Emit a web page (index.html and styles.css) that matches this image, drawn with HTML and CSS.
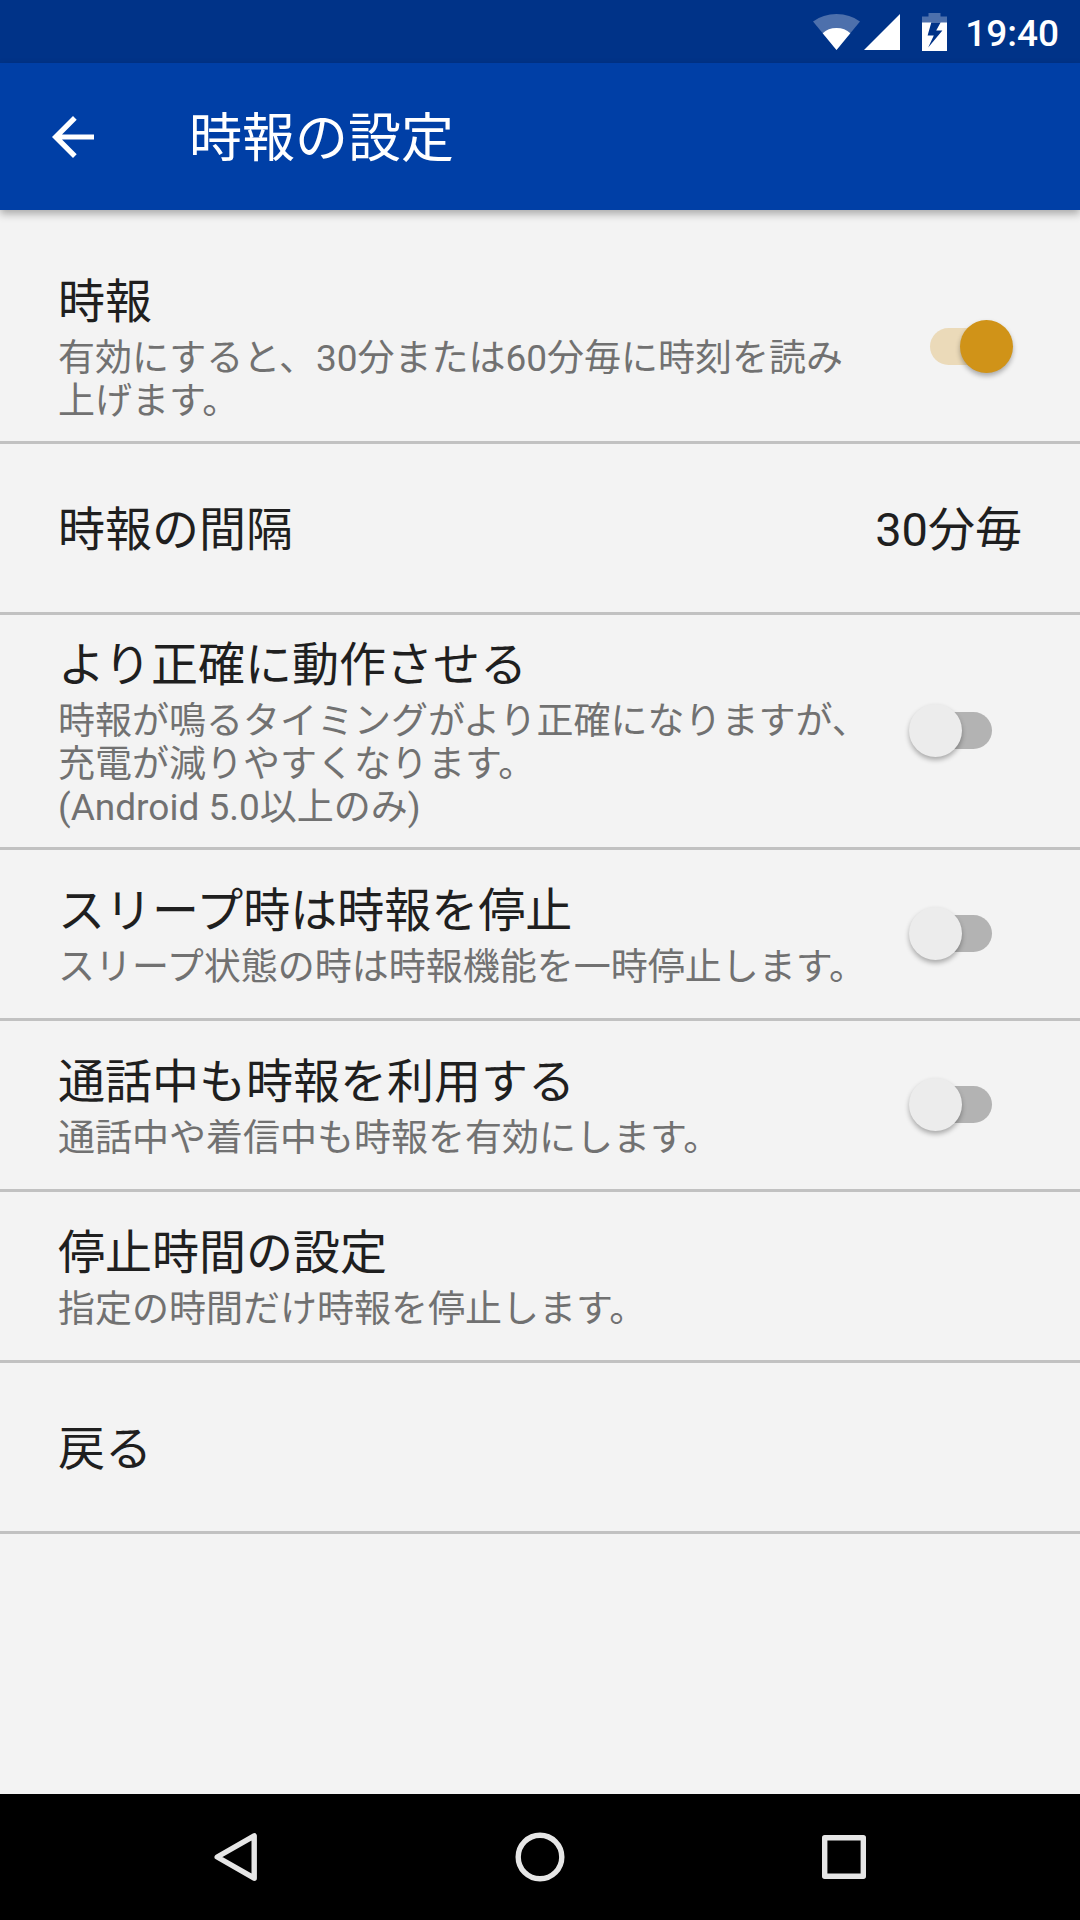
FILE: index.html
```
<!DOCTYPE html>
<html lang="ja">
<head>
    <meta charset="UTF-8">
    <title>時報の設定</title>
    <link rel="stylesheet" href="styles.css">
</head>
<body>
<div class="status-bar">
    <svg class="wifi" width="47" height="36" viewBox="0 0 47 36">
        <path class="dim" d="M23.5 36L0 7.5Q10 0 23.5 0T47 7.5z"/>
        <path d="M23.5 36L9.7 19.2Q15 14 23.5 14T37.3 19.2z"/>
    </svg>
    <svg class="signal" width="36" height="36" viewBox="0 0 36 36">
        <path d="M36 0v36H0z"/>
    </svg>
    <svg class="battery" width="25" height="38" viewBox="0 0 25 38">
        <path class="dim" d="M6.5 0h12v3.5H25V10H0V3.5h6.5z"/>
        <path fill-rule="evenodd" d="M0 9.5h9.3L5.6 22.5h6.2L6.2 34.5 20.4 17.5h-6.2l4.4-8H25V38H0z"/>
    </svg>
    <span class="time">19:40</span>
</div>
<header class="toolbar">
    <svg class="back" width="42" height="42" viewBox="0 0 42 42">
        <path d="M42 18.4v5.2H10l14.7 14.7L21 42 0 21 21 0l3.7 3.7L10 18.4z"/>
    </svg>
    <h1>時報の設定</h1>
</header>
<main class="list">
    <div class="row">
        <div class="text">
            <p class="title">時報</p>
            <p class="summary">有効にすると、30分または60分毎に時刻を読み<br>上げます。</p>
        </div>
        <div class="switch on"><span class="thumb"></span></div>
    </div>
    <div class="row">
        <div class="text">
            <p class="title">時報の間隔</p>
        </div>
        <div class="value">
            <p class="title">30分毎</p>
        </div>
    </div>
    <div class="row">
        <div class="text">
            <p class="title">より正確に動作させる</p>
            <p class="summary">時報が鳴るタイミングがより正確になりますが、<br>充電が減りやすくなります。<br>(Android 5.0以上のみ)</p>
        </div>
        <div class="switch"><span class="thumb"></span></div>
    </div>
    <div class="row">
        <div class="text">
            <p class="title">スリープ時は時報を停止</p>
            <p class="summary">スリープ状態の時は時報機能を一時停止します。</p>
        </div>
        <div class="switch"><span class="thumb"></span></div>
    </div>
    <div class="row">
        <div class="text">
            <p class="title">通話中も時報を利用する</p>
            <p class="summary">通話中や着信中も時報を有効にします。</p>
        </div>
        <div class="switch"><span class="thumb"></span></div>
    </div>
    <div class="row">
        <div class="text">
            <p class="title">停止時間の設定</p>
            <p class="summary">指定の時間だけ時報を停止します。</p>
        </div>
    </div>
    <div class="row">
        <div class="text">
            <p class="title">戻る</p>
        </div>
    </div>
</main>
<nav class="nav-bar">
    <svg width="50" height="50" viewBox="0 0 50 50">
        <path d="M43.2 3.8v42.4L6.2 25z"/>
    </svg>
    <svg width="50" height="50" viewBox="0 0 50 50">
        <circle cx="25" cy="25" r="21.8"/>
    </svg>
    <svg width="50" height="50" viewBox="0 0 50 50">
        <rect x="5.7" y="5.7" width="38.6" height="38.6"/>
    </svg>
</nav>
</body>
</html>
```
FILE: styles.css
```
*{margin:0;padding:0;box-sizing:border-box}
body{
    display:flex;
    flex-direction:column;
    height:1920px;
    background:#f3f3f3;
    color:#1f1f1f;
    font-family:Roboto,"Noto Sans CJK JP",sans-serif;
}
/*状态栏*/
.status-bar{
    display:flex;
    align-items:center;
    justify-content:flex-end;
    height:63px;
    padding-right:21px;
    background:#003388;
    color:#fff;
}
.status-bar svg{fill:#fff}
.status-bar .dim{fill:#4d70ac}
.signal{margin-left:4px}
.battery{margin-left:22px}
.time{
    margin-left:18px;
    font-size:37px;
    font-weight:500;
    line-height:63px;
    padding-top:3px;
}
/*标题栏*/
.toolbar{
    display:flex;
    align-items:center;
    height:147px;
    padding-left:52px;
    background:#003fa6;
    color:#fff;
    box-shadow:0 4px 8px rgba(0,0,0,.3);
}
.back{fill:#fff}
.toolbar h1{
    margin-left:95px;
    padding-top:5px;
    font-size:53px;
    font-weight:400;
    line-height:63px;
}
/*设置列表*/
.list{
    flex:1;
    padding-top:42px;
}
.row{
    display:flex;
    align-items:center;
    min-height:171px;
    padding:19px 58px 18px;
    border-bottom:3px solid #c1c1c1;
}
.text{
    flex:1;
    white-space:nowrap;
}
.text,.value{padding-top:3px}
.title{
    font-size:47px;
    line-height:55px;
}
.title:only-child{margin-bottom:2px}
.summary{
    margin-top:8px;
    color:#717171;
    font-size:37px;
    line-height:43px;
}
/*开关*/
.switch{
    display:flex;
    align-items:center;
    width:62px;
    height:37px;
    margin:0 30px 2px 0;
    border-radius:19px;
    background:#b3b3b3;
}
.thumb{
    flex:none;
    width:53px;
    height:53px;
    margin-left:-21px;
    border-radius:50%;
    background:#ececec;
    box-shadow:0 3px 5px rgba(0,0,0,.3);
}
.switch.on{background:#ebdab9}
.on .thumb{
    margin-left:30px;
    background:#d09318;
}
/*导航栏*/
.nav-bar{
    display:flex;
    align-items:center;
    justify-content:center;
    gap:254px;
    height:126px;
    background:#000;
}
.nav-bar svg{
    fill:none;
    stroke:#e6e6e6;
    stroke-width:5.4;
    stroke-linejoin:round;
}
```
